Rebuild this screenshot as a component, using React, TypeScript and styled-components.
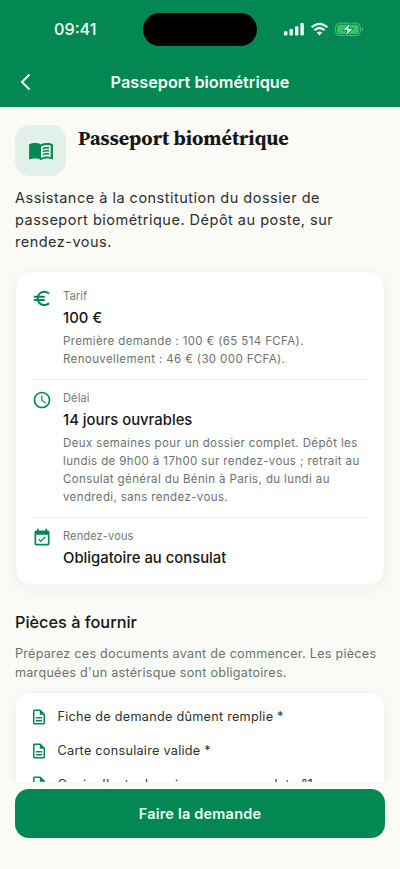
import React from 'react';
import styled, { createGlobalStyle } from 'styled-components';
import { MdSchedule, MdEventAvailable, MdOutlineDescription } from 'react-icons/md';

const Global = createGlobalStyle`
  * { box-sizing: border-box; }
  body { margin: 0; background: #fafaf7; }
`;

const Screen = styled.div`
  display: flex;
  flex-direction: column;
  width: 400px;
  height: 869px;
  overflow: hidden;
  background: #fafaf7;
  color: #151715;
  font-family: Inter, sans-serif;
`;
const Header = styled.header`
  flex: none;
  height: 107px;
  background: #048853;
  color: #f4fffa;
`;
const StatusBar = styled.div`
  display: grid;
  grid-template-columns: 143px 114px 1fr;
  align-items: center;
  height: 58px;
`;
const Time = styled.div`
  padding: 0 0 0 54px;
  font-size: 16.2px;
  font-weight: 550;
  line-height: 20px;
`;
const Island = styled.div`
  height: 33px;
  border-radius: 17px;
  background: #000;
`;
const Indicators = styled.div`
  display: flex;
  align-items: center;
  padding: 1px 0 0 27px;
`;
const NavBar = styled.div`
  display: grid;
  grid-template-columns: 50px 1fr 50px;
  align-items: center;
  height: 47px;
`;
const BackButton = styled.button`
  display: flex;
  padding: 0 0 0 19.5px;
  border: 0;
  background: none;
  color: inherit;
`;
const NavTitle = styled.div`
  text-align: center;
  font-size: 16.3px;
  font-weight: 600;
  line-height: 22px;
`;
const Content = styled.main`
  flex: none;
  height: 675px;
  overflow: hidden;
  padding: 18px 15px 0;
`;
const Hero = styled.div`
  display: flex;
  gap: 12px;
`;
const HeroIcon = styled.div`
  display: flex;
  align-items: center;
  justify-content: center;
  width: 51px;
  height: 51px;
  border-radius: 15px;
  background: #e1f0e8;
  color: #048853;
`;
const HeroTitle = styled.h1`
  margin: 0;
  font-family: "Source Serif 4", "Liberation Serif", serif;
  font-size: 20px;
  font-weight: 700;
  line-height: 27px;
  white-space: nowrap;
`;
const Intro = styled.p`
  margin: 11px 0 18px;
  color: #2d302e;
  font-size: 14.5px;
  letter-spacing: 0.49px;
  line-height: 22px;
`;
const Card = styled.section`
  border: 1px solid #f4f4f1;
  border-radius: 15px;
  background: #fff;
  box-shadow: 0 4px 16px rgba(40, 40, 20, 0.05);
  padding: 0 16px;
`;
const InfoRow = styled.div<{ $top: number; $bottom: number }>`
  display: grid;
  grid-template-columns: 31px 1fr;
  padding: ${(p) => p.$top}px 0 ${(p) => p.$bottom}px;
  & + & { border-top: 1px solid #eeefec; }
`;
const RowIcon = styled.div`
  display: flex;
  color: #048853;
  height: 22px;
`;
const Label = styled.div`
  color: #747a76;
  font-size: 11.1px;
  letter-spacing: 0.1px;
  line-height: 16px;
`;
const Value = styled.div`
  margin-top: 3px;
  font-size: 14.85px;
  font-weight: 500;
  line-height: 22px;
`;
const Detail = styled.div`
  margin-top: 3px;
  color: #6c716e;
  font-size: 11.5px;
  letter-spacing: 0.38px;
  line-height: 18px;
  white-space: nowrap;
`;
const SectionTitle = styled.h2`
  margin: 25px 0 0;
  font-size: 16.3px;
  font-weight: 550;
  line-height: 24px;
`;
const SectionText = styled.p`
  margin: 10px 0 10px;
  color: #6c716e;
  font-size: 12.6px;
  letter-spacing: 0.26px;
  line-height: 19px;
  white-space: nowrap;
`;
const DocList = styled(Card)`
  padding: 7px 14px;
`;
const DocRow = styled.div`
  display: flex;
  align-items: center;
  gap: 9.500px;
  height: 33.800px;
  color: #2d302e;
  font-size: 12.7px;
  letter-spacing: 0.25px;
  white-space: nowrap;
  svg { color: #048853; flex: none; }
`;
const Footer = styled.footer`
  flex: 1;
  padding: 7px 15px 0;
`;
const Submit = styled.button`
  width: 100%;
  height: 49px;
  border: 0;
  border-radius: 14px;
  background: #048853;
  color: #eafff5;
  font: 600 14.5px Inter, sans-serif;
  letter-spacing: 0.2px;
`;

const BookIcon = () => (
  <svg width="26" height="26" viewBox="0 0 24 24">
    <path
      fill="currentColor"
      fillRule="evenodd"
      d="M12 6C10.500 4.900 8.400 4.500 6.500 4.500C4.600 4.500 2.500 4.900 1 6V20C2.500 19.200 4.600 19 6.500 19C8.400 19 10.500 19.400 12 20.500C13.500 19.400 15.600 19 17.500 19C19.400 19 21.500 19.200 23 20V6C21.500 4.900 19.400 4.500 17.500 4.500C15.600 4.500 13.500 4.900 12 6ZM21 17.500C19.900 17.150 18.700 17 17.500 17C15.800 17 13.350 17.650 12 18.500V8C13.350 7.150 15.800 6.500 17.500 6.500C18.700 6.500 19.900 6.650 21 7Z"
    />
    <path
      fill="none"
      stroke="currentColor"
      strokeWidth="1.4"
      d="M13.700 9.900C15.300 9.100 17.500 8.900 19.500 9.300M13.700 12.600C15.300 11.800 17.500 11.600 19.500 12M13.700 15.300C15.300 14.500 17.500 14.300 19.500 14.700"
    />
  </svg>
);

const EuroIcon = () => (
  <svg width="20" height="20" viewBox="0 0 20 20" fill="none" stroke="currentColor" strokeWidth="2" strokeLinecap="round">
    <path d="M16.500 5.200A6.700 6.700 0 1 0 16.500 15.600M2.600 8.700H12M2.600 12.100H12" />
  </svg>
);

const StatusIcons = () => (
  <svg width="82" height="16" viewBox="0 0 82 16" fill="none">
    <g fill="#f4fffa">
      <rect x="0" y="9.300" width="3.400" height="4.200" rx="1" />
      <rect x="5.500" y="7" width="3.400" height="6.500" rx="1" />
      <rect x="11" y="4.200" width="3.400" height="9.300" rx="1" />
      <rect x="16.400" y="1" width="3.400" height="12.500" rx="1" />
      <path d="M35.500 13.500 32.700 10.500Q35.500 8.300 38.300 10.500Z" />
    </g>
    <g stroke="#f4fffa" strokeWidth="2.200">
      <path d="M27.600 5.300Q35.500-1.700 43.400 5.300" />
      <path d="M30.400 8.200Q35.500 3.800 40.600 8.200" />
    </g>
    <rect x="51.600" y="1.200" width="24.700" height="12.300" rx="4" stroke="#60b58c" />
    <rect x="53.200" y="2.800" width="21.500" height="9.100" rx="2.600" fill="#35c759" />
    <path d="M77.800 5.500v4q1.400-.5 1.400-2t-1.400-2Z" fill="#60b58c" />
    <path d="M66.600.2 58.300 8.300h4.700l-1.700 6.300 8.300-8.300h-4.800Z" fill="#c9f7d8" stroke="#048853" strokeWidth="1" />
  </svg>
);

const BackIcon = () => (
  <svg width="12" height="18" viewBox="0 0 12 18" fill="none" stroke="currentColor" strokeWidth="2">
    <path d="M9.500 1.500 2 9l7.500 7.500" />
  </svg>
);

const documents = ['Fiche de demande dûment remplie *', 'Carte consulaire valide *', "Copie d'acte de naissance avec volet n°1"];

export default function App() {
  return (
    <Screen>
      <Global />
      <Header>
        <StatusBar>
          <Time>09:41</Time>
          <Island />
          <Indicators><StatusIcons /></Indicators>
        </StatusBar>
        <NavBar>
          <BackButton aria-label="Retour"><BackIcon /></BackButton>
          <NavTitle>Passeport biométrique</NavTitle>
        </NavBar>
      </Header>
      <Content>
        <Hero>
          <HeroIcon><BookIcon /></HeroIcon>
          <HeroTitle>Passeport biométrique</HeroTitle>
        </Hero>
        <Intro>
          Assistance à la constitution du dossier de<br />
          passeport biométrique. Dépôt au poste, sur<br />
          rendez-vous.
        </Intro>
        <Card>
          <InfoRow $top={16} $bottom={11}>
            <RowIcon><EuroIcon /></RowIcon>
            <div>
              <Label>Tarif</Label>
              <Value>100 €</Value>
              <Detail>Première demande : 100 € (65 514 FCFA).<br />Renouvellement : 46 € (30 000 FCFA).</Detail>
            </div>
          </InfoRow>
          <InfoRow $top={10} $bottom={11}>
            <RowIcon><MdSchedule size={20} /></RowIcon>
            <div>
              <Label>Délai</Label>
              <Value>14 jours ouvrables</Value>
              <Detail>
                Deux semaines pour un dossier complet. Dépôt les<br />
                lundis de 9h00 à 17h00 sur rendez-vous ; retrait au<br />
                Consulat général du Bénin à Paris, du lundi au<br />
                vendredi, sans rendez-vous.
              </Detail>
            </div>
          </InfoRow>
          <InfoRow $top={10} $bottom={15}>
            <RowIcon><MdEventAvailable size={20} /></RowIcon>
            <div>
              <Label>Rendez-vous</Label>
              <Value>Obligatoire au consulat</Value>
            </div>
          </InfoRow>
        </Card>
        <SectionTitle>Pièces à fournir</SectionTitle>
        <SectionText>
          Préparez ces documents avant de commencer. Les pièces<br />
          marquées d'un astérisque sont obligatoires.
        </SectionText>
        <DocList>
          {documents.map((name) => (
            <DocRow key={name}><MdOutlineDescription size={18} />{name}</DocRow>
          ))}
        </DocList>
      </Content>
      <Footer><Submit>Faire la demande</Submit></Footer>
    </Screen>
  );
}
